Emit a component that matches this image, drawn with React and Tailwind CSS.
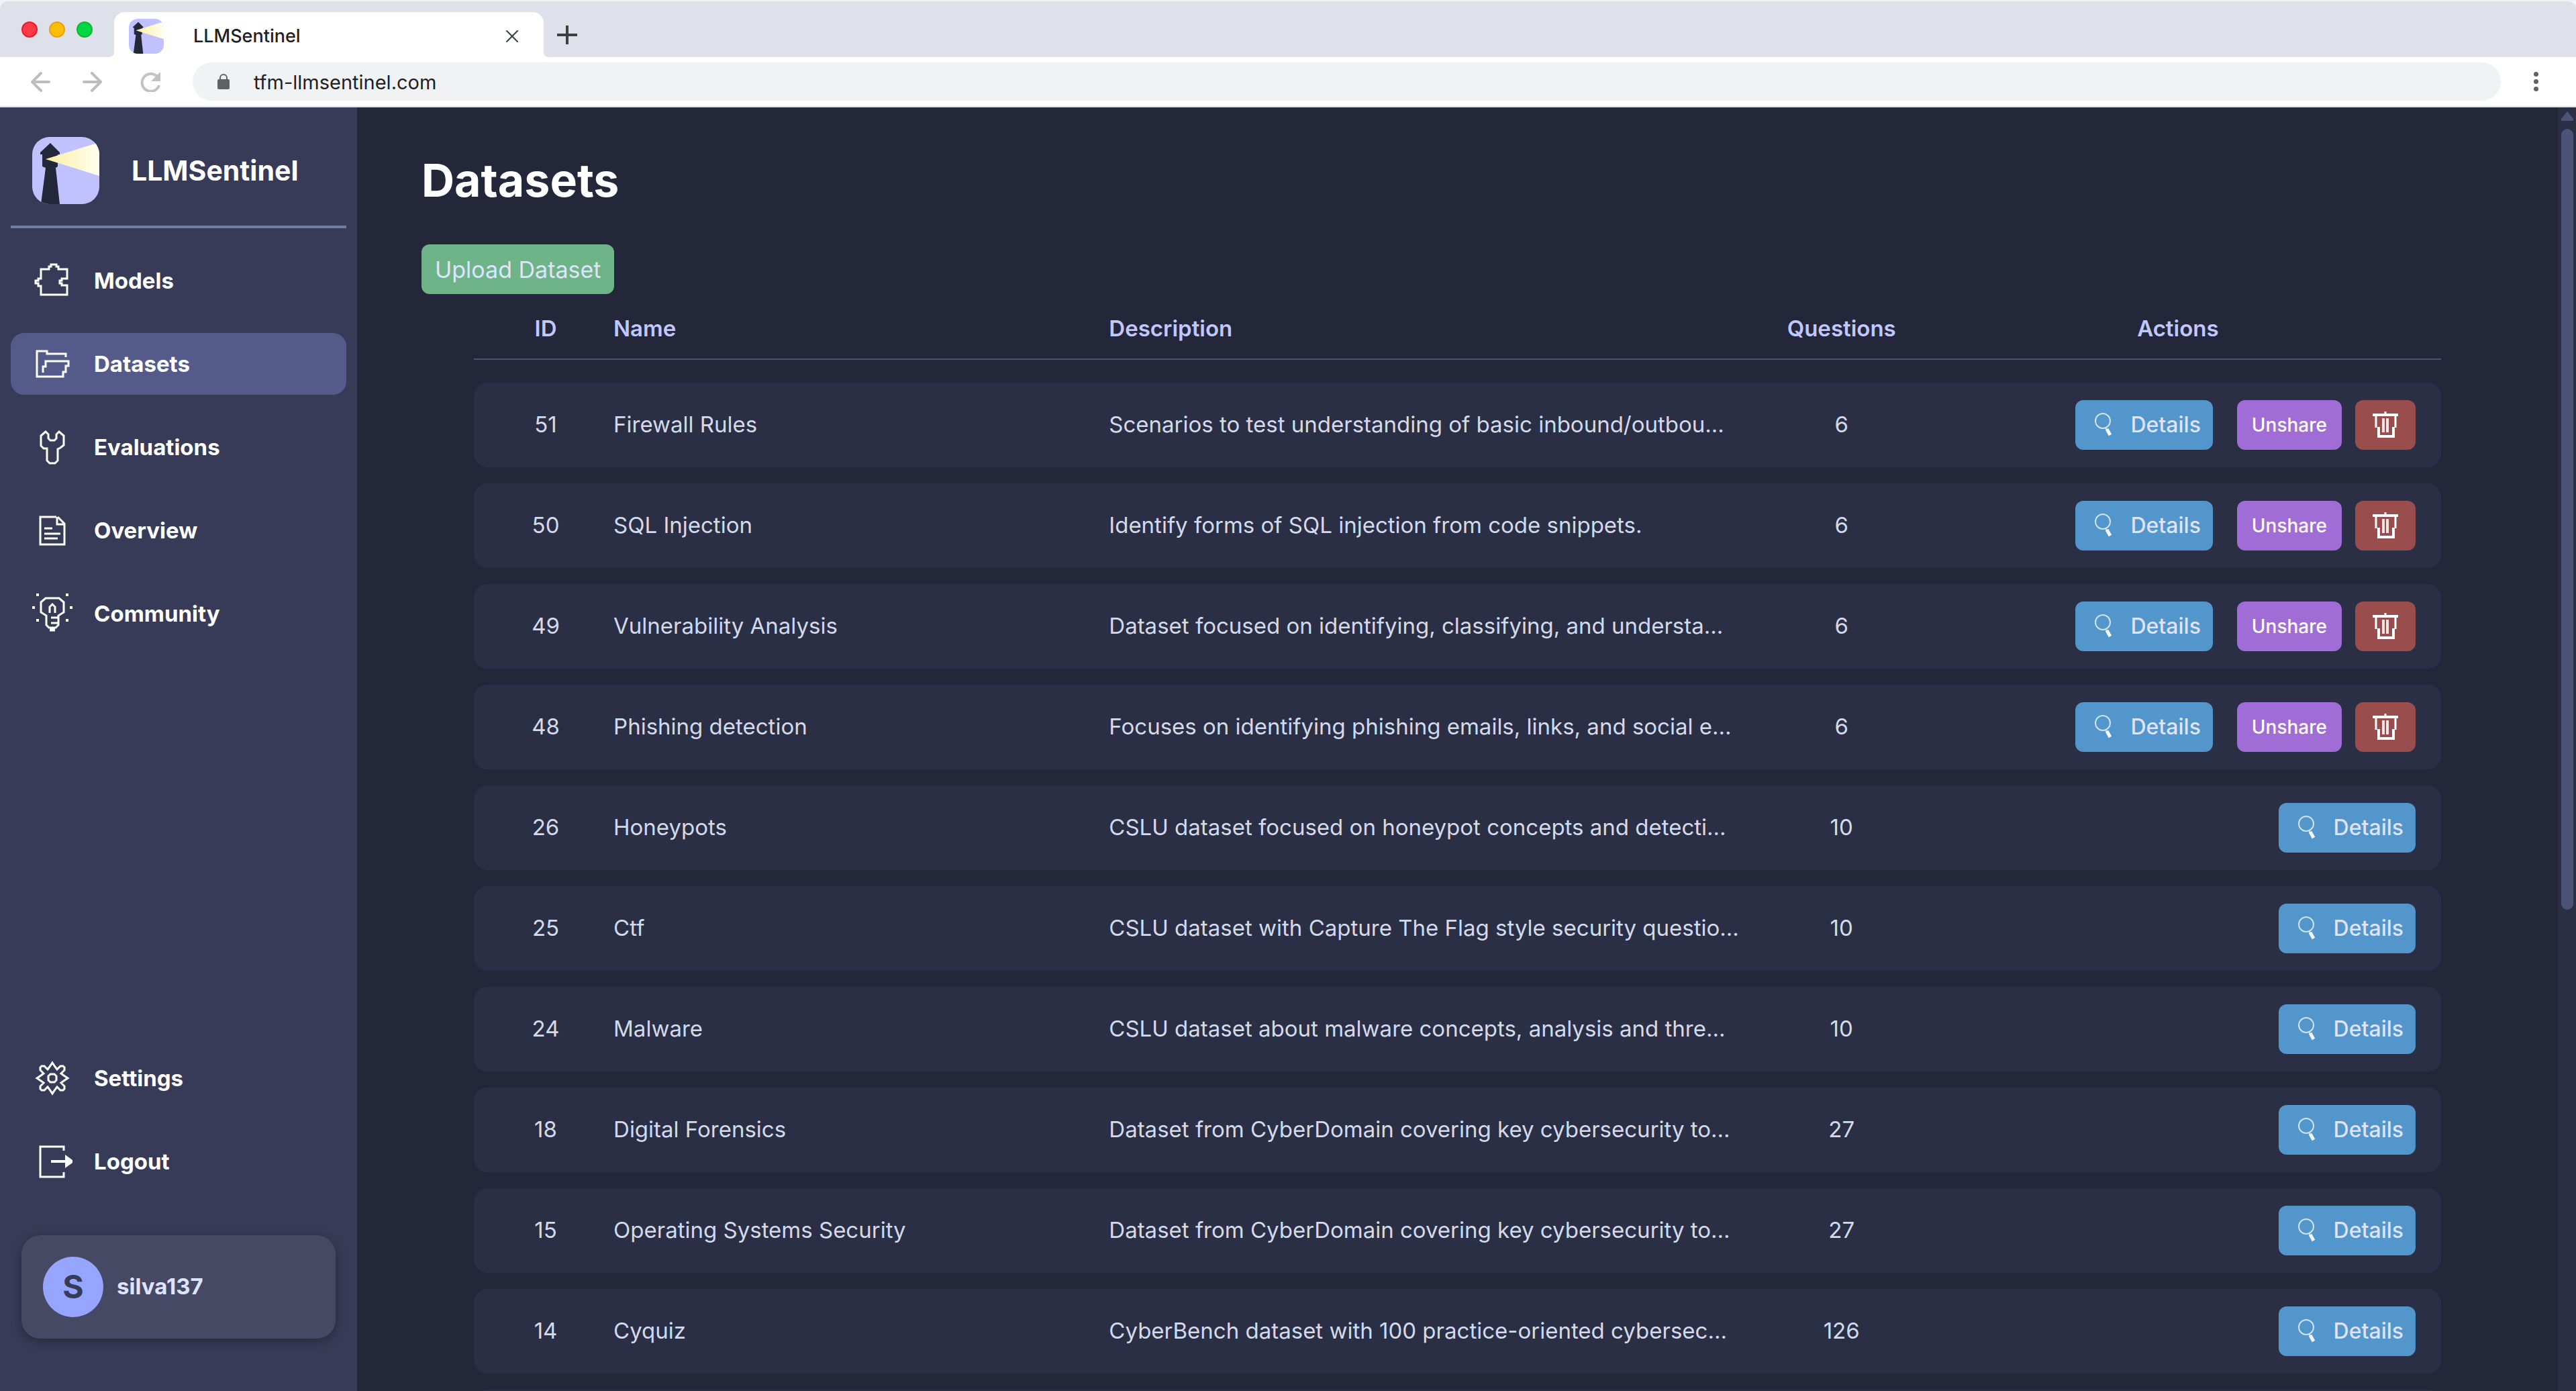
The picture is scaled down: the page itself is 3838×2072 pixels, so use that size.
import React from "react";

const datasets = [
  { id: 51, name: "Firewall Rules", description: "Scenarios to test understanding of basic inbound/outbou…", questions: 6, owned: true },
  { id: 50, name: "SQL Injection", description: "Identify forms of SQL injection from code snippets.", questions: 6, owned: true },
  { id: 49, name: "Vulnerability Analysis", description: "Dataset focused on identifying, classifying, and understa…", questions: 6, owned: true },
  { id: 48, name: "Phishing detection", description: "Focuses on identifying phishing emails, links, and social e…", questions: 6, owned: true },
  { id: 26, name: "Honeypots", description: "CSLU dataset focused on honeypot concepts and detecti…", questions: 10 },
  { id: 25, name: "Ctf", description: "CSLU dataset with Capture The Flag style security questio…", questions: 10 },
  { id: 24, name: "Malware", description: "CSLU dataset about malware concepts, analysis and thre…", questions: 10 },
  { id: 18, name: "Digital Forensics", description: "Dataset from CyberDomain covering key cybersecurity to…", questions: 27 },
  { id: 15, name: "Operating Systems Security", description: "Dataset from CyberDomain covering key cybersecurity to…", questions: 27 },
  { id: 14, name: "Cyquiz", description: "CyberBench dataset with 100 practice-oriented cybersec…", questions: 126 },
];

const columns = "grid grid-cols-[208fr_738fr_944fr_294fr_746fr] items-center";

function Logo({ id, className }) {
  return (
    <svg viewBox="0 0 100 100" className={className} aria-hidden="true">
      <defs>
        <linearGradient id={id} x1="0" x2="1" y1="0" y2="0">
          <stop offset="0" stopColor="#fdeea2" />
          <stop offset="1" stopColor="#fffff0" />
        </linearGradient>
      </defs>
      <rect width="100" height="100" fill="#c2c1ff" />
      <path d="M27 9 L41 23 V26 H38 V44 L35 46 L41 100 H13 L20 46 L15 44 V26 H12 V23 Z" fill="#23273a" />
      <path d="M20 33 L100 8 V58 Z" fill={`url(#${id})`} />
    </svg>
  );
}

function LineIcon({ children }) {
  return (
    <svg viewBox="0 0 60 60" className="size-15 shrink-0" fill="none" stroke="white" strokeWidth="3" aria-hidden="true">
      {children}
    </svg>
  );
}

const icons = {
  models: (
    <path d="M13 13 H25 V9 H28 V6 H36 V9 H39 V13 H52 V27 H44 V30 H41 V34 H44 V37 H52 V51 H13 V38 H9 V34 H5 V30 H9 V27 H13 Z" />
  ),
  datasets: <path d="M50 20 V15 H22 V11 H7 V49 H46 V42 H50 V33 H54 V26 H20 V34 H16 V43" />,
  evaluations: (
    <path d="M20 7 L13 13 V28 L17 32 H22 V50 L26 54 H34 L38 50 V33 L42 31 L47 27 V13 L40 7 L36 11 V17 L33 20 H27 L24 17 V11 Z" />
  ),
  overview: (
    <>
      <path d="M36 10 H12 V51 H48 V20 L38 10" />
      <path d="M37 10 V21 H48 M18 27 H30 M18 35 H42 M18 42 H38" />
    </>
  ),
  community: (
    <>
      <path d="M20 7 H40 L47 13 V28 L39 33 V47 L35 51 H25 L21 47 V33 L13 28 V13 Z" />
      <path d="M26 29 V20 L30 16 L34 20 V29 M28 36 H38 M28 44 H38" />
      <path d="M26 54 H34" strokeWidth="5" />
      <path d="M6 2 H10 M50 2 H54 M0 21 H4 M56 21 H60 M6 40 H10 M50 40 H54" strokeWidth="4" />
    </>
  ),
  settings: (
    <>
      <path d="M30 7 L34 13 L37 17 L42 12 H46 L48 14 V18 L43 23 L47 26 L53 30 L47 34 L43 37 L48 42 V46 L46 48 H42 L37 43 L34 47 L30 53 L26 47 L23 43 L18 48 H14 L12 46 V42 L17 37 L13 34 L7 30 L13 26 L17 23 L12 18 V14 L14 12 H18 L23 17 L26 13 Z" />
      <path d="M27 24 H33 L36 27 V33 L33 36 H27 L24 33 V27 Z" />
    </>
  ),
  logout: (
    <>
      <path d="M47 14 V8 H12 V53 H47 V46" />
      <path d="M28 30 H50" strokeWidth="4" />
      <path d="M49 20 L60 28 V32 L49 40 Z" fill="white" stroke="none" />
    </>
  ),
};

function NavItem({ icon, label, active }) {
  return (
    <a
      href={`#${icon}`}
      aria-current={active ? "page" : undefined}
      className={`flex h-23 items-center gap-8 rounded-[20px] px-8 text-[33px] font-bold text-white ${active ? "bg-[#545b8a]" : ""}`}
    >
      <LineIcon>{icons[icon]}</LineIcon>
      <span className="pt-0.5">{label}</span>
    </a>
  );
}

function BrowserBar() {
  return (
    <header className="shrink-0 bg-[#f1f2f6] pt-0.5">
      <div className="flex h-[83px] items-center rounded-t-[12px] bg-[#dee1e9] pl-8">
        <div className="flex gap-[17px]">
          <span className="size-6 rounded-full border-2 border-[#f3192b] bg-[#ff3b47]" />
          <span className="size-6 rounded-full border-2 border-[#e8a010] bg-[#ffbd00]" />
          <span className="size-6 rounded-full border-2 border-[#12b52c] bg-[#00d742]" />
        </div>
        <svg viewBox="0 0 8 8" className="ml-6 size-2 self-end" aria-hidden="true">
          <path d="M8 0 V8 H0 Q8 8 8 0" fill="white" />
        </svg>
        <div className="flex h-[67px] w-160 items-center self-end rounded-t-[16px] bg-white pt-1 pr-[37px] pl-[22px]">
          <Logo id="beam-tab" className="size-13 rounded-[13px]" />
          <span className="ml-11 flex-1 pt-0.5 text-[27px] font-medium text-[#202124]">LLMSentinel</span>
          <button aria-label="Close tab" className="size-5">
            <svg viewBox="0 0 20 20" className="size-5" stroke="#3c4043" strokeWidth="2" strokeLinecap="round">
              <path d="M2 2 L18 18 M18 2 L2 18" />
            </svg>
          </button>
        </div>
        <svg viewBox="0 0 8 8" className="size-2 self-end" aria-hidden="true">
          <path d="M0 0 V8 H8 Q0 8 0 0" fill="white" />
        </svg>
        <button aria-label="New tab" className="ml-3 pt-4">
          <svg viewBox="0 0 30 30" className="size-[30px]" stroke="#3c4043" strokeWidth="4">
            <path d="M0 15 H30 M15 1 V29" />
          </svg>
        </button>
      </div>
      <div className="flex h-[75px] items-center border-b-2 border-[#dddfe4] bg-white pr-12 pl-[45px]">
        <button aria-label="Back" className="size-[30px]">
          <svg viewBox="0 0 30 30" fill="none" stroke="#bdbdbd" strokeWidth="4" strokeLinecap="round" strokeLinejoin="round">
            <path d="M28 15 H3 M16 2 L3 15 L16 28" />
          </svg>
        </button>
        <button aria-label="Forward" className="ml-12 size-[30px]">
          <svg viewBox="0 0 30 30" fill="none" stroke="#bdbdbd" strokeWidth="4" strokeLinecap="round" strokeLinejoin="round">
            <path d="M2 15 H27 M14 2 L27 15 L14 28" />
          </svg>
        </button>
        <button aria-label="Reload" className="ml-14 size-[30px]">
          <svg viewBox="0 0 30 30" fill="none">
            <path d="M25 7 A13 13 0 1 0 28 20" stroke="#c2c2c2" strokeWidth="4" />
            <path d="M30 0 V14 H16 Z" fill="#c2c2c2" />
          </svg>
        </button>
        <label className="ml-12 flex h-[57px] flex-1 items-center gap-9 rounded-full bg-[#f1f2f4] pl-[37px]">
          <svg viewBox="0 0 18 24" className="h-6 w-[18px]" aria-hidden="true">
            <path d="M4 10 V6 A5 5 0 0 1 14 6 V10" fill="none" stroke="#5f6368" strokeWidth="2" />
            <rect y="8" width="18" height="15" rx="2" fill="#5f6163" />
          </svg>
          <input
            aria-label="Address"
            defaultValue="tfm-llmsentinel.com"
            className="flex-1 bg-transparent pt-0.5 text-[29px] text-[#202124] outline-none"
          />
        </label>
        <button aria-label="Browser menu" className="ml-10 flex w-6 flex-col items-center gap-1">
          <span className="size-[7px] rounded-full bg-[#5f6368]" />
          <span className="size-[7px] rounded-full bg-[#5f6368]" />
          <span className="size-[7px] rounded-full bg-[#5f6368]" />
        </button>
      </div>
    </header>
  );
}

function Sidebar() {
  return (
    <aside className="flex w-[532px] shrink-0 flex-col bg-[#383b57] px-4 pt-11 pb-[78px]">
      <div className="flex items-center gap-12 border-b-4 border-[#6d7ea0] pb-8 pl-8">
        <Logo id="beam-side" className="size-25 rounded-[26px]" />
        <span className="pt-0.5 text-[41px] font-bold text-white">LLMSentinel</span>
      </div>
      <nav aria-label="Main" className="mt-8 flex flex-col gap-8">
        <NavItem icon="models" label="Models" />
        <NavItem icon="datasets" label="Datasets" active />
        <NavItem icon="evaluations" label="Evaluations" />
        <NavItem icon="overview" label="Overview" />
        <NavItem icon="community" label="Community" />
      </nav>
      <nav aria-label="Account" className="mt-auto flex flex-col gap-8">
        <NavItem icon="settings" label="Settings" />
        <NavItem icon="logout" label="Logout" />
      </nav>
      <div className="mx-4 mt-16 flex items-center gap-5 rounded-[28px] bg-[#454963] p-8 shadow-[0_4px_16px_rgba(0,0,0,0.3)]">
        <span className="flex size-[90px] items-center justify-center rounded-full bg-[#96a5ff] text-[48px] font-bold text-[#383b57]">S</span>
        <span className="text-[33px] font-bold text-[#dfe3ff]">silva137</span>
      </div>
    </aside>
  );
}

function DetailsButton() {
  return (
    <button className="flex h-[74px] items-center gap-4 rounded-[12px] bg-[#5296cb] px-[18px] text-[32px] font-medium text-[#dfe3ff]">
      <svg viewBox="0 0 48 48" className="size-12" fill="none" aria-hidden="true">
        <circle cx="23" cy="18" r="11" stroke="#cfe3f0" strokeWidth="2" />
        <path d="M27 28 L29 31" stroke="#cfe3f0" strokeWidth="2" />
        <path d="M29 30 L34 39" stroke="#f2f8fb" strokeWidth="5" />
      </svg>
      Details
    </button>
  );
}

function DeleteButton() {
  return (
    <button aria-label="Delete dataset" className="flex h-[74px] items-center rounded-[12px] bg-[#9a4d4d] px-[21px]">
      <svg viewBox="0 0 48 48" className="size-12" fill="none" stroke="white">
        <path d="M5 9 H43" strokeWidth="4" />
        <path d="M24 4 V8 M10 10 V28 M39 10 V28" strokeWidth="3" />
        <path d="M14 27 V41 H36 V27" strokeWidth="4" />
        <path d="M21 14 V35 M27 14 V35" stroke="#f3e6e6" strokeWidth="4" />
      </svg>
    </button>
  );
}

function DatasetRow({ id, name, description, questions, owned }) {
  return (
    <tr className={`${columns} h-[126px] shrink-0 rounded-[20px] bg-[#2b2f45]`}>
      <td className="pl-1.5 text-center">{id}</td>
      <td>{name}</td>
      <td className="whitespace-nowrap">{description}</td>
      <td className="text-center">{questions}</td>
      <td className="flex justify-end pr-[38px]">
        <DetailsButton />
        {owned && (
          <>
            <button className="mr-5 ml-9 h-[74px] rounded-[12px] bg-[#a06cd5] px-[22px] text-[28px] font-medium text-white">
              Unshare
            </button>
            <DeleteButton />
          </>
        )}
      </td>
    </tr>
  );
}

export default function App() {
  return (
    <div className="flex h-screen flex-col overflow-hidden font-['Inter',sans-serif]">
      <BrowserBar />
      <div className="flex min-h-0 flex-1">
        <Sidebar />
        <main className="min-w-0 flex-1 overflow-hidden bg-[#232739] px-24 pt-15">
          <h1 className="text-[68px] leading-24 font-bold text-white">Datasets</h1>
          <button className="mt-12 block h-[74px] rounded-[12px] bg-[#6eb488] px-5 text-[34px] text-[#dfe3ff]">
            Upload Dataset
          </button>
          <table className="mx-[78px] block text-[33px] text-[#d3daea]">
            <thead className="block border-b-2 border-[#4d5377]">
              <tr className={`${columns} h-24 pt-2 text-[#c0c8ff]`}>
                <th className="pl-1.5 text-center font-semibold">ID</th>
                <th className="text-left font-semibold">Name</th>
                <th className="text-left font-semibold">Description</th>
                <th className="text-center font-semibold">Questions</th>
                <th className="pr-[38px] text-center font-semibold">Actions</th>
              </tr>
            </thead>
            <tbody className="mt-[34px] flex flex-col gap-6">
              {datasets.map((dataset) => (
                <DatasetRow key={dataset.id} {...dataset} />
              ))}
              <tr className="h-[126px] shrink-0 rounded-[20px] bg-[#2b2f45]" />
            </tbody>
          </table>
        </main>
        <div className="flex w-[27px] shrink-0 flex-col items-center gap-3 bg-[#2b2f45] pt-1.5" aria-hidden="true">
          <svg viewBox="0 0 18 14" className="h-3.5 w-[18px] shrink-0">
            <path d="M9 0 L18 11 V14 H0 V11 Z" fill="#4d5377" />
          </svg>
          <div className="h-[61%] w-[18px] rounded-full bg-[#4d5377]" />
        </div>
      </div>
    </div>
  );
}
